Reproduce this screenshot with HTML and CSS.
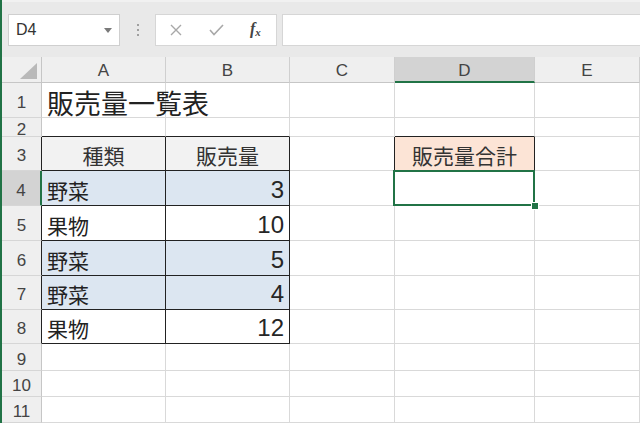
FILE: index.html
```html
<!DOCTYPE html>
<html lang="ja">
<head>
<meta charset="utf-8">
<title>販売量一覧表</title>
<link rel="stylesheet" href="styles.css">
</head>
<body>
<div class="app">
  <div class="toolbar">
    <div class="namebox">
      <span class="name">D4</span>
      <svg class="drop" width="8" height="5" viewBox="0 0 8 5"><polygon points="0,0 8,0 4,5" fill="#7a7a7a"/></svg>
    </div>
    <div class="dots"><span></span><span></span><span></span></div>
    <div class="fbuttons">
      <svg class="ficon" width="12" height="12" viewBox="0 0 12 12"><path d="M1 1 L11 11 M11 1 L1 11" stroke="#a8a8a8" stroke-width="1.4" fill="none"/></svg>
      <svg class="ficon" width="15" height="12" viewBox="0 0 15 12"><polyline points="1,6 5,10.5 14,1" stroke="#a8a8a8" stroke-width="1.6" fill="none"/></svg>
      <span class="fx"><i>f</i><sub>x</sub></span>
    </div>
    <div class="formula"></div>
  </div>

  <div class="sheet">
    <!-- header row -->
    <div class="corner"><svg width="17" height="16" viewBox="0 0 17 16"><polygon points="17,0 17,16 0,16" fill="#b9b9b9"/></svg></div>
    <div class="ch">A</div>
    <div class="ch">B</div>
    <div class="ch">C</div>
    <div class="ch sel">D</div>
    <div class="ch">E</div>

    <!-- row 1 -->
    <div class="rh">1</div>
    <div class="c title">販売量一覧表</div>
    <div class="c"></div>
    <div class="c"></div>
    <div class="c"></div>
    <div class="c"></div>

    <!-- row 2 -->
    <div class="rh">2</div>
    <div class="c tb-top"></div>
    <div class="c tb-top"></div>
    <div class="c"></div>
    <div class="c tb-top"></div>
    <div class="c"></div>

    <!-- row 3 -->
    <div class="rh tb-left">3</div>
    <div class="c t head">種類</div>
    <div class="c t head">販売量</div>
    <div class="c tb-right"></div>
    <div class="c t sum">販売量合計</div>
    <div class="c"></div>

    <!-- row 4 -->
    <div class="rh tb-left selrow">4</div>
    <div class="c t blue">野菜</div>
    <div class="c t blue num">3</div>
    <div class="c"></div>
    <div class="c active"><span class="handle"></span></div>
    <div class="c"></div>

    <!-- row 5 -->
    <div class="rh tb-left">5</div>
    <div class="c t">果物</div>
    <div class="c t num">10</div>
    <div class="c"></div>
    <div class="c"></div>
    <div class="c"></div>

    <!-- row 6 -->
    <div class="rh tb-left">6</div>
    <div class="c t blue">野菜</div>
    <div class="c t blue num">5</div>
    <div class="c"></div>
    <div class="c"></div>
    <div class="c"></div>

    <!-- row 7 -->
    <div class="rh tb-left">7</div>
    <div class="c t blue">野菜</div>
    <div class="c t blue num">4</div>
    <div class="c"></div>
    <div class="c"></div>
    <div class="c"></div>

    <!-- row 8 -->
    <div class="rh tb-left">8</div>
    <div class="c t">果物</div>
    <div class="c t num">12</div>
    <div class="c"></div>
    <div class="c"></div>
    <div class="c"></div>

    <!-- row 9 -->
    <div class="rh">9</div>
    <div class="c"></div>
    <div class="c"></div>
    <div class="c"></div>
    <div class="c"></div>
    <div class="c"></div>

    <!-- row 10 -->
    <div class="rh">10</div>
    <div class="c"></div>
    <div class="c"></div>
    <div class="c"></div>
    <div class="c"></div>
    <div class="c"></div>

    <!-- row 11 -->
    <div class="rh">11</div>
    <div class="c"></div>
    <div class="c"></div>
    <div class="c"></div>
    <div class="c"></div>
    <div class="c"></div>
  </div>
</div>
</body>
</html>
```
FILE: styles.css
```css
* { box-sizing: border-box; }
html, body { margin: 0; padding: 0; }
body {
  width: 640px;
  height: 423px;
  overflow: hidden;
  background: #ffffff;
  font-family: "Noto Sans CJK JP", "Liberation Sans", sans-serif;
  color: #222;
}
.app {
  border-left: 2px solid #217346;
  height: 423px;
  display: flex;
  flex-direction: column;
}

/* toolbar */
.toolbar {
  height: 57px;
  background: #e9e9e9;
  display: flex;
  align-items: center;
  padding-left: 6px;
  border-top: 2px solid #f1f1f1;
  flex: none;
}
.namebox {
  width: 112px;
  height: 32px;
  background: #fff;
  border: 1px solid #cfcfcf;
  display: flex;
  align-items: center;
  justify-content: space-between;
  padding: 0 7px 0 7px;
}
.name {
  font-family: "Liberation Sans", sans-serif;
  font-size: 16px;
  color: #333;
}
.drop { margin-top: 1px; }
.dots {
  width: 35px;
  display: flex;
  flex-direction: column;
  align-items: center;
  gap: 3px;
}
.dots span {
  width: 2px;
  height: 2px;
  background: #a0a0a0;
}
.fbuttons {
  width: 122px;
  height: 32px;
  background: #fff;
  border: 1px solid #d6d6d6;
  display: flex;
  align-items: center;
  padding-left: 14px;
  gap: 0;
}
.ficon:first-child { margin-right: 27px; }
.ficon:nth-child(2) { margin-right: 26px; }
.fx {
  font-family: "Liberation Serif", serif;
  font-size: 16px;
  color: #444;
  font-weight: bold;
  line-height: 1;
}
.fx sub {
  font-size: 11px;
  font-style: italic;
  vertical-align: -2px;
}
.formula {
  flex: 1;
  height: 32px;
  margin-left: 5px;
  background: #fff;
  border: 1px solid #d6d6d6;
  border-right: none;
}

/* sheet */
.sheet {
  flex: 1;
  display: grid;
  grid-template-columns: 40px 124px 124px 105px 140px 1fr;
  grid-template-rows: 26px 35px 19px 34px 35px 35px 35px 34px 34px 27px 26px 26px;
}
.corner {
  background: #efefef;
  border-right: 1px solid #c6c6c6;
  border-bottom: 1px solid #c6c6c6;
  display: flex;
  align-items: flex-end;
  justify-content: flex-end;
  padding: 0 4px 3px 0;
}
.ch {
  background: #efefef;
  border-right: 1px solid #cfcfcf;
  border-bottom: 1px solid #c6c6c6;
  display: flex;
  align-items: center;
  justify-content: center;
  padding-top: 3px;
  font-family: "Liberation Sans", sans-serif;
  font-size: 17px;
  color: #444;
}
.ch.sel {
  background: #d3d3d3;
  border-bottom: 2px solid #217346;
}
.rh {
  background: #efefef;
  border-right: 1px solid #c6c6c6;
  border-bottom: 1px solid #d6d6d6;
  display: flex;
  align-items: center;
  justify-content: center;
  padding-top: 5px;
  font-family: "Liberation Sans", sans-serif;
  font-size: 17px;
  color: #444;
  overflow: hidden;
}
.rh.tb-left { border-right-color: #222; }
.rh.selrow {
  background: #d3d3d3;
  border-right: 2px solid #217346;
}
.c {
  position: relative;
  border-right: 1px solid #d9d9d9;
  border-bottom: 1px solid #d9d9d9;
  display: flex;
  align-items: center;
  padding: 3px 5px 0 5px;
  font-size: 21px;
  color: #222;
  white-space: nowrap;
}
.c.title {
  font-size: 27px;
  padding-left: 5px;
  padding-top: 4px;
  overflow: visible;
}
.c.tb-top { border-bottom-color: #222; }
.c.tb-right { border-right-color: #222; }
.c.t {
  border-right-color: #222;
  border-bottom-color: #222;
}
.c.head {
  background: #f2f2f2;
  justify-content: center;
  color: #333;
}
.c.blue { background: #dce6f1; }
.c.num {
  justify-content: flex-end;
  font-family: "Liberation Sans", sans-serif;
  font-size: 24px;
  color: #262626;
  padding-right: 5px;
}
.c.sum {
  background: #fce4d6;
  justify-content: center;
  color: #333;
}
.c.active::before {
  content: "";
  position: absolute;
  left: -2px;
  top: -1px;
  right: -1px;
  bottom: -1px;
  border: 2px solid #217346;
}
.handle {
  position: absolute;
  right: -4px;
  bottom: -4px;
  width: 6px;
  height: 6px;
  background: #217346;
  outline: 1px solid #ffffff;
  z-index: 2;
}
```
